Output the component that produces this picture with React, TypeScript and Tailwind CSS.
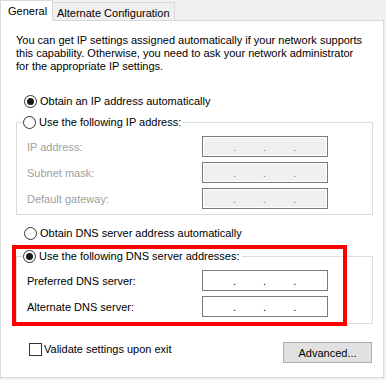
import React from "react";

// Little Win32-style controls
function Radio({ checked, disabled }: { checked?: boolean; disabled?: boolean }) {
  return (
    <span
      className={`flex h-[13px] w-[13px] shrink-0 items-center justify-center rounded-full border bg-white ${
        disabled ? "border-[#bcbcbc]" : "border-[#333333]"
      }`}
    >
      {checked && <span className="h-[7px] w-[7px] rounded-full bg-[#1a1a1a]" />}
    </span>
  );
}

function IpBox({ disabled }: { disabled?: boolean }) {
  return (
    <div
      className={`ml-auto mr-[44px] flex h-[21px] w-[126px] items-center border pl-[30px] gap-[27px] ${
        disabled
          ? "border-[#7a7a7a] bg-[#f0f0f0] shadow-[inset_0_0_0_1px_#ffffff] text-[#8a8a8a]"
          : "border-[#7a7a7a] bg-white text-black"
      }`}
    >
      <span>.</span>
      <span>.</span>
      <span>.</span>
    </div>
  );
}

function Row({ label, disabled }: { label: string; disabled?: boolean }) {
  return (
    <div className="flex h-[21px] items-center">
      <span className={`pl-[10px] ${disabled ? "text-[#a0a0a0]" : "text-black"}`}>{label}</span>
      <IpBox disabled={disabled} />
    </div>
  );
}

export default function App() {
  return (
    <div
      className="relative h-[380px] w-[386px] bg-[#f0f0f0] text-[11px] leading-[14px] text-black"
      style={{ fontFamily: '"Liberation Sans", Arial, sans-serif' }}
    >
      {/* Tabs */}
      <div className="flex h-[20px] items-start">
        <div className="relative z-10 h-[21px] w-[53px] border-l border-r border-t border-[#d9d9d9] bg-white pl-[7px] pt-[3px]">
          General
        </div>
        <div className="mt-[2px] h-[18px] border-r border-t border-[#d9d9d9] bg-[#f0f0f0] px-[4px] pt-[3px]">
          Alternate Configuration
        </div>
      </div>

      {/* Panel */}
      <div className="h-[358px] w-[384px] border border-[#d9d9d9] bg-white pl-[14px] pr-[10px] pt-[13px]">
        <p className="pl-[1px] leading-[13px]">
          You can get IP settings assigned automatically if your network supports
          <br />
          this capability. Otherwise, you need to ask your network administrator
          <br />
          for the appropriate IP settings.
        </p>

        <div className="ml-[9px] mt-[21px] flex h-[14px] items-center gap-[3px]">
          <Radio checked />
          <span>Obtain an IP address automatically</span>
        </div>

        {/* IP group */}
        <div className="ml-[1px] mt-[14px] border border-[#dcdcdc] pb-[5px]">
          <div className="-mt-[8px] ml-[6px] flex h-[14px] w-fit items-center gap-[3px] bg-white pr-[2px]">
            <Radio />
            <span>Use the following IP address:</span>
          </div>
          <div className="mt-[7px] flex flex-col gap-[5px]">
            <Row label="IP address:" disabled />
            <Row label="Subnet mask:" disabled />
            <Row label="Default gateway:" disabled />
          </div>
        </div>

        <div className="ml-[9px] mt-[11px] flex h-[14px] items-center gap-[3px]">
          <Radio />
          <span>Obtain DNS server address automatically</span>
        </div>

        {/* DNS group */}
        <div className="ml-[1px] mt-[16px] border border-[#dcdcdc] pb-[6px]">
          <div className="-mt-[8px] ml-[6px] flex h-[14px] w-fit items-center gap-[3px] bg-white pr-[2px]">
            <Radio checked />
            <span>Use the following DNS server addresses:</span>
          </div>
          <div className="mt-[7px] flex flex-col gap-[5px]">
            <Row label="Preferred DNS server:" />
            <Row label="Alternate DNS server:" />
          </div>
        </div>

        {/* Footer */}
        <div className="mt-[18px] flex items-start">
          <div className="ml-[14px] mt-[0px] flex items-center gap-[2px]">
            <span className="h-[13px] w-[13px] border border-[#333333] bg-white" />
            <span>Validate settings upon exit</span>
          </div>
          <button className="ml-auto mr-[1px] h-[21px] w-[89px] border border-[#adadad] bg-[#e1e1e1] text-[11px]">
            Advanced...
          </button>
        </div>
      </div>

      {/* Red highlight */}
      <div className="absolute left-[12px] top-[245px] h-[81px] w-[335px] border-[4px] border-[#ff0000]" />
    </div>
  );
}
